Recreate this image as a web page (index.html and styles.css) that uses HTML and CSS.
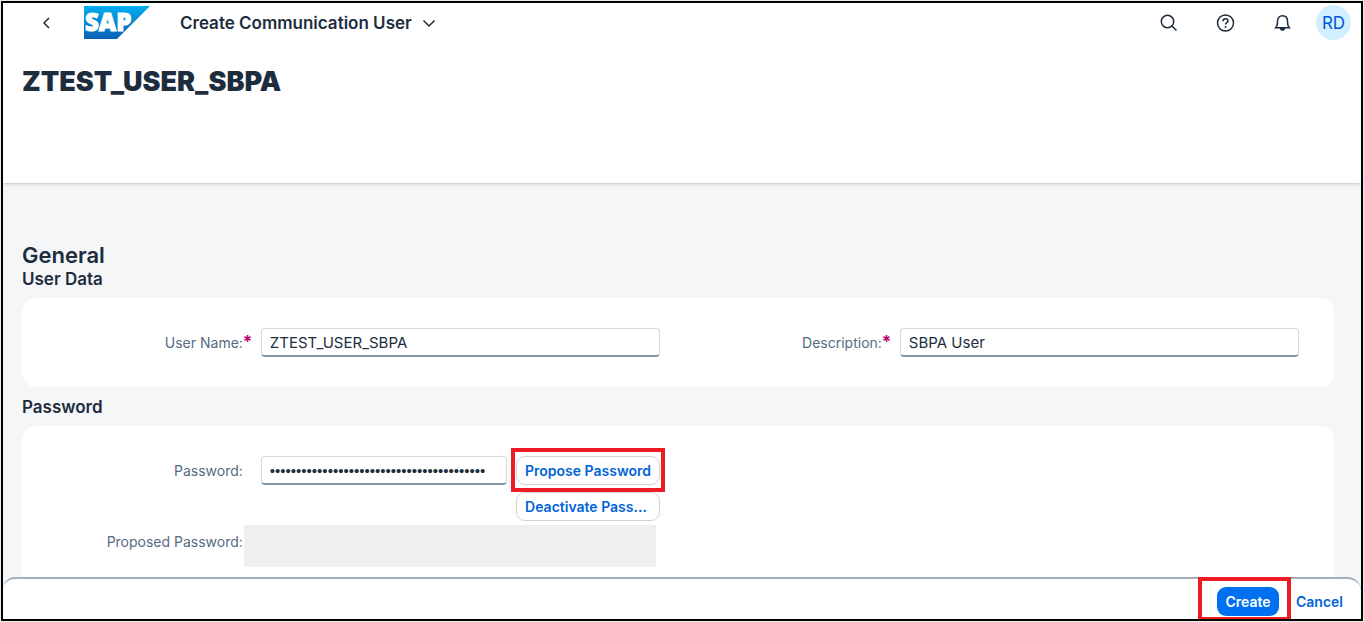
FILE: index.html
```html
<!DOCTYPE html>
<html lang="en">
<head>
<meta charset="utf-8">
<title>Create Communication User</title>
<link rel="stylesheet" href="styles.css">
</head>
<body>
<div class="app">
  <header class="top">
    <div class="shell">
      <button class="icon-btn back" aria-label="Back">
        <svg width="20" height="20" viewBox="0 0 20 20"><path d="M13 5 8 10l5 5"/></svg>
      </button>
      <svg class="logo" width="66" height="33" viewBox="0 0 66 33" role="img" aria-label="SAP">
        <defs><linearGradient id="sap" x1="0" y1="0" x2="0" y2="1"><stop offset="0" stop-color="#00aeef"/><stop offset="1" stop-color="#0a62b4"/></linearGradient></defs>
        <path d="M0 0H66L33 33H0Z" fill="url(#sap)"/>
        <text class="logo-text" x="1" y="25">SAP</text>
      </svg>
      <button class="app-title">Create Communication User
        <svg width="14" height="14" viewBox="0 0 14 14"><path d="M1.500 4.500l5.500 5.500 5.500-5.500"/></svg>
      </button>
      <div class="tools">
        <button class="icon-btn" aria-label="Search">
          <svg width="20" height="20" viewBox="0 0 20 20"><circle cx="8.500" cy="8.500" r="6.200"/><path d="M13 13 17.500 17.500"/></svg>
        </button>
        <button class="icon-btn" aria-label="Help">
          <svg width="20" height="20" viewBox="0 0 20 20"><circle cx="9.500" cy="10" r="8"/><path d="M7 8.200C7 6.500 8.200 5.700 9.500 5.700s2.500.9 2.500 2.200c0 1.700-2.500 1.800-2.500 3.600"/><circle class="solid" cx="9.500" cy="14" r="1"/></svg>
        </button>
        <button class="icon-btn" aria-label="Notifications">
          <svg width="20" height="20" viewBox="0 0 20 20"><path d="M2.700 14.700C4.200 13.300 4.500 11.500 4.500 8.500 4.500 4.800 6.500 2.800 9.500 2.800s5 2 5 5.700c0 3 .3 4.800 1.800 6.200Z"/><path class="solid" d="M6.500 15h6c-.5 1.900-1.500 2.800-3 2.800S7 16.900 6.500 15Z"/></svg>
        </button>
        <button class="avatar">RD</button>
      </div>
    </div>
    <h1 class="object-title">ZTEST_USER_SBPA</h1>
  </header>

  <main class="content">
    <h2 class="section-title">General</h2>
    <section>
      <h3 class="group-title">User Data</h3>
      <div class="card">
        <div class="form">
          <label class="label" for="user">User Name:<span class="req">*</span></label>
          <input class="input" id="user" type="text" value="ZTEST_USER_SBPA">
        </div>
        <div class="form">
          <label class="label" for="desc">Description:<span class="req">*</span></label>
          <input class="input" id="desc" type="text" value="SBPA User">
        </div>
      </div>
    </section>
    <section>
      <h3 class="group-title">Password</h3>
      <div class="card">
        <div class="form">
          <label class="label optional" for="pwd">Password:</label>
          <div class="pair">
            <input class="input password" id="pwd" type="password" value="abcdefghijklmnopqrstuvwxyzabcdefghijklmno">
            <div class="marked">
              <button class="btn outline">Propose Password</button>
            </div>
          </div>
          <button class="btn outline second">Deactivate Pass...</button>
          <label class="label optional proposed" for="proposed">Proposed Password:</label>
          <output class="masked" id="proposed"></output>
        </div>
      </div>
    </section>
  </main>

  <footer class="footer">
    <div class="marked create"><button class="btn primary">Create</button></div>
    <button class="btn text">Cancel</button>
  </footer>
</div>
</body>
</html>
```
FILE: styles.css
```css
* {
  box-sizing: border-box;
}

body {
  margin: 0;
  padding: 1px;
  height: 100vh;
  background: #e8ece8;
  color: #1d2d3e;
  font-family: Inter, "Open Sans", sans-serif;
  font-size: 15px;
}

button,
input {
  font: inherit;
  color: inherit;
}

button {
  padding: 0;
  border: 0;
  background: none;
  cursor: pointer;
}

h1,
h2,
h3 {
  margin: 0;
}

.app {
  display: flex;
  flex-direction: column;
  height: 100%;
  overflow: hidden;
  border: 2px solid #000;
  background: #f5f6f7;
}

/* Header */
.top {
  position: relative;
  flex: none;
  height: 180px;
  background: #fff;
  box-shadow: 0 0 2px rgba(34, 53, 72, 0.3), 0 2px 4px rgba(34, 53, 72, 0.1);
}

.shell {
  display: flex;
  align-items: center;
  height: 39px;
  padding: 0 10px 0 33px;
}

.icon-btn {
  display: grid;
  place-items: center;
  width: 20px;
  height: 32px;
}

.icon-btn svg,
.app-title svg {
  fill: none;
  stroke: #1d2d3e;
  stroke-width: 1.5;
}

.icon-btn .solid {
  fill: #1d2d3e;
  stroke: none;
}

.logo {
  margin: 0 30px 0 28px;
}

.logo-text {
  fill: #fff;
  stroke: #fff;
  stroke-width: 1;
  font-family: "Open Sans", sans-serif;
  font-size: 24px;
  font-weight: 800;
}

.app-title {
  display: flex;
  align-items: center;
  gap: 10px;
  font-size: 17px;
  font-weight: 600;
}

.tools {
  display: flex;
  align-items: center;
  gap: 37px;
  margin-left: auto;
}

.avatar {
  width: 35px;
  height: 35px;
  margin-left: -14px;
  border-radius: 50%;
  background: #d1efff;
  color: #0057d2;
  font-size: 17px;
}

.object-title {
  padding: 23px 19px 0;
  font-size: 27px;
  font-weight: 900;
  line-height: 34px;
}

/* Form content */
.content {
  flex: 1;
  min-height: 0;
  overflow: hidden;
  padding: 58px 27px 0 19px;
}

.section-title {
  font-size: 22px;
  font-weight: 600;
  line-height: 28px;
}

.group-title {
  height: 29px;
  font-size: 17px;
  font-weight: 600;
  line-height: 20px;
}

section + section {
  margin-top: 10px;
}

.card {
  display: grid;
  grid-template-columns: 1fr 1fr;
  padding: 30px 17px;
  border-radius: 14px;
  background: #fff;
}

.form {
  display: grid;
  grid-template-columns: 8fr 15fr;
  column-gap: 9px;
  align-content: start;
  padding-right: 18px;
}

.label {
  color: #556b82;
  font-size: 14px;
  line-height: 29px;
  text-align: right;
  white-space: nowrap;
}

.optional {
  padding-right: 9px;
}

.proposed {
  line-height: 33px;
}

.req {
  display: inline-block;
  width: 9px;
  color: #ba066c;
  font-size: 17px;
  font-weight: 700;
  line-height: 20px;
}

.input {
  width: 100%;
  min-width: 0;
  height: 29px;
  padding: 0 8px;
  border: 1px solid #d5dade;
  border-bottom: 2px solid #8396a8;
  border-radius: 4px;
  background: #fff;
}

.password {
  font-family: "Liberation Sans", sans-serif;
}

.pair {
  display: grid;
  grid-template-columns: 1fr 144px;
  gap: 9px;
}

.marked {
  position: relative;
}

.marked::after {
  content: "";
  position: absolute;
  inset: -8px -5px -7px;
  border: 4px solid #ed1c24;
  pointer-events: none;
}

.btn {
  height: 29px;
  border-radius: 9px;
  color: #0064d9;
  font-size: 14px;
  font-weight: 600;
}

.outline {
  width: 144px;
  border: 1px solid #cdd3d8;
  background: #fff;
}

.second {
  grid-column: 2;
  justify-self: end;
  margin: 7px 0 4px;
  padding-right: 4px;
}

.masked {
  height: 42px;
  margin: 0 4px 0 -17px;
  background: #efefef;
}

/* Footer */
.footer {
  position: relative;
  flex: none;
  display: flex;
  justify-content: flex-end;
  align-items: center;
  gap: 17px;
  height: 42px;
  margin-top: -14px;
  padding: 4px 18px 0;
  border-top: 2px solid #a3afba;
  border-radius: 12px 14px 0 0;
  background: #fff;
}

.primary {
  width: 62px;
  background: #0070f2;
  color: #fff;
}

.create::after {
  inset: -10px -12px -5px -19px;
}
```
